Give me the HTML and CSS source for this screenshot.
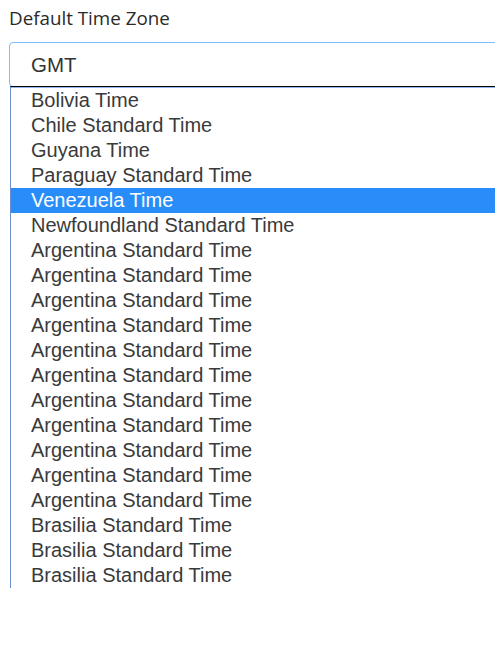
FILE: index.html
```html
<!DOCTYPE html>
<html>
<head>
<meta charset="utf-8">
<link rel="stylesheet" href="styles.css">
</head>
<body>
<div class="field">
  <label class="label">Default Time Zone</label>
  <div class="select">GMT</div>
  <ul class="listbox">
    <li>Bolivia Time</li>
    <li>Chile Standard Time</li>
    <li>Guyana Time</li>
    <li>Paraguay Standard Time</li>
    <li class="selected">Venezuela Time</li>
    <li>Newfoundland Standard Time</li>
    <li>Argentina Standard Time</li>
    <li>Argentina Standard Time</li>
    <li>Argentina Standard Time</li>
    <li>Argentina Standard Time</li>
    <li>Argentina Standard Time</li>
    <li>Argentina Standard Time</li>
    <li>Argentina Standard Time</li>
    <li>Argentina Standard Time</li>
    <li>Argentina Standard Time</li>
    <li>Argentina Standard Time</li>
    <li>Argentina Standard Time</li>
    <li>Brasilia Standard Time</li>
    <li>Brasilia Standard Time</li>
    <li>Brasilia Standard Time</li>
  </ul>
</div>
</body>
</html>
```

FILE: styles.css
```css
html, body {
  margin: 0;
  padding: 0;
  background: #fff;
  overflow: hidden;
}
.field {
  padding: 5px 0 0 9px;
  width: 540px;
}
.label {
  display: block;
  font-family: "Open Sans", sans-serif;
  font-size: 18.8px;
  line-height: 26px;
  color: #2a2a2a;
  margin-left: 0;
}
.select {
  margin-top: 11px;
  height: 45px;
  box-sizing: border-box;
  border: 1px solid #80bdff;
  border-radius: 4px;
  padding: 0 0 0 21px;
  font-family: "Liberation Sans", Arial, sans-serif;
  font-size: 20.5px;
  color: #333;
  display: flex;
  align-items: center;
}
.listbox {
  list-style: none;
  margin: -1px 0 0 1px;
  padding: 1px 0 0;
  border-top: 1px solid #000;
  border-left: 1px solid #6a8fd0;
  box-shadow: inset 0 1px 0 #8fb6ee;
  background: #fff;
}
.listbox li {
  height: 25px;
  line-height: 25px;
  padding-left: 20px;
  font-family: "Liberation Sans", Arial, sans-serif;
  font-size: 20px;
  color: #3a3a3a;
  white-space: nowrap;
}
.listbox li.selected {
  background: #288df8;
  color: #fff;
}
```
